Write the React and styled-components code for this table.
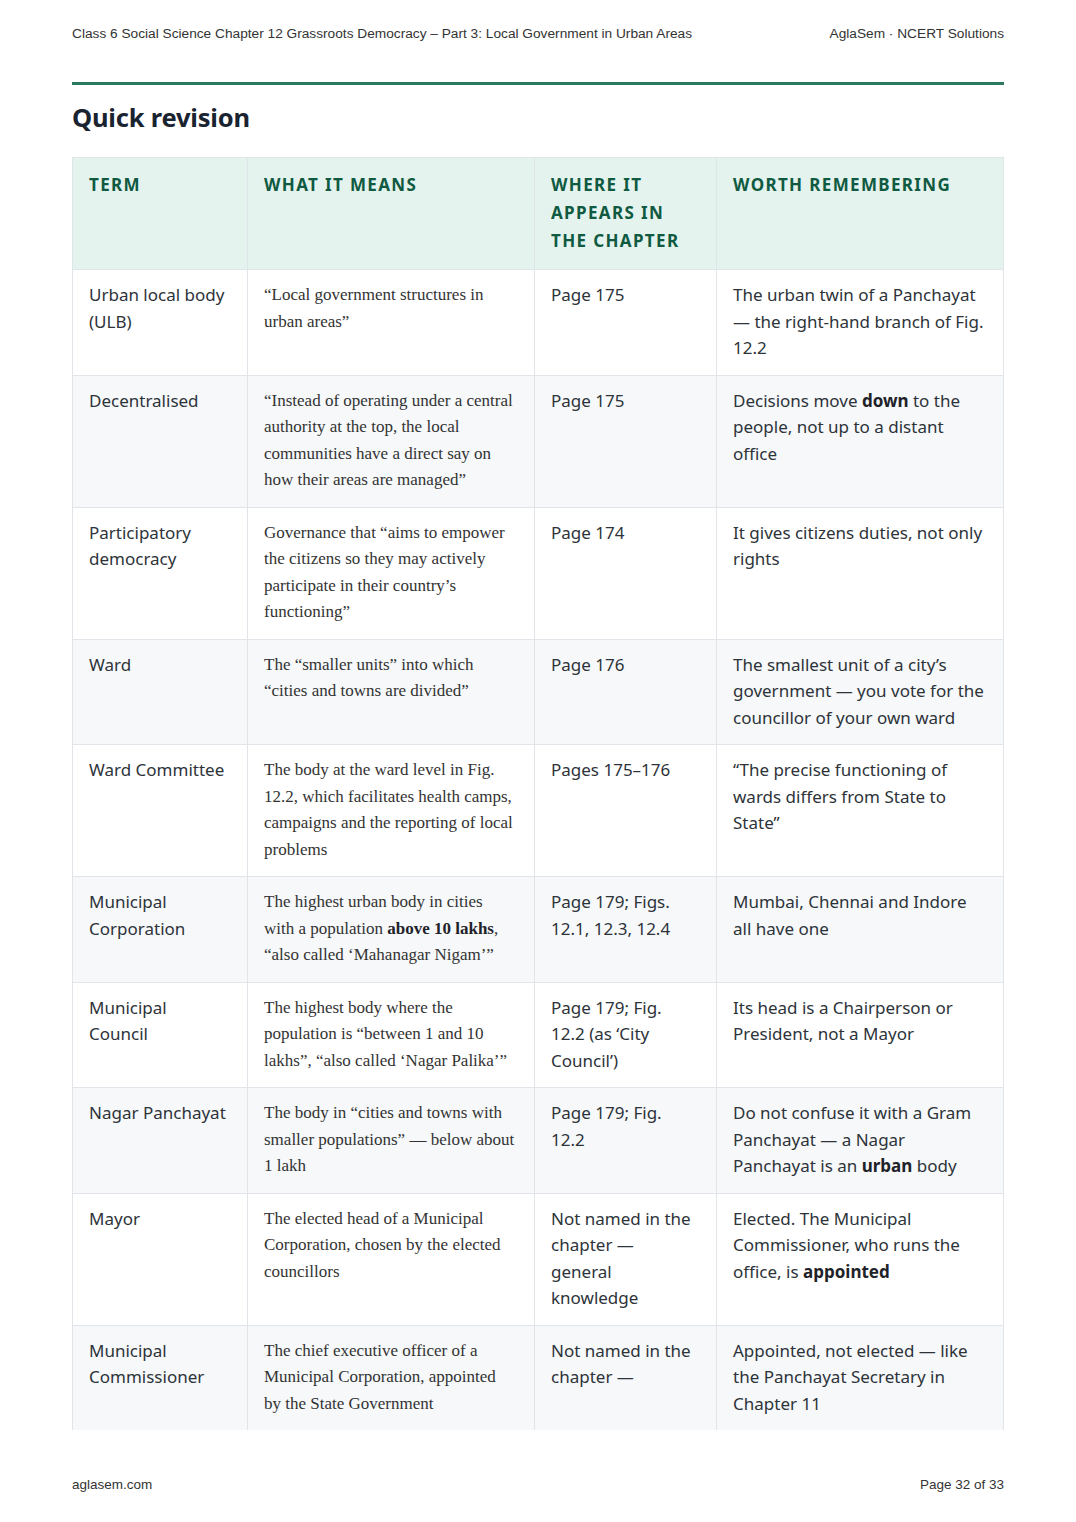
import React from "react";
import styled, { createGlobalStyle } from "styled-components";

const GlobalStyle = createGlobalStyle`
  html, body {
    margin: 0;
    padding: 0;
    background: #ffffff;
  }
  * {
    box-sizing: border-box;
  }
`;

const Page = styled.div`
  width: 1076px;
  min-height: 1522px;
  padding: 0 72px 29px 72px;
  display: flex;
  flex-direction: column;
  font-family: "Noto Sans", "Open Sans", sans-serif;
  color: #2d3339;
`;

const RunningHead = styled.header`
  display: flex;
  justify-content: space-between;
  align-items: center;
  padding-top: 26px;
  font-family: "Liberation Sans", Arial, sans-serif;
  font-size: 13.7px;
  line-height: 16px;
  color: #333;
`;

const Rule = styled.hr`
  margin: 40px 0 0;
  border: none;
  height: 3px;
  background: #2b7a5f;
`;

const Title = styled.h1`
  margin: 15px 0 23px;
  font-size: 25.5px;
  line-height: 34px;
  font-weight: 700;
  color: #1a2330;
  letter-spacing: -0.2px;
`;

const Table = styled.table`
  width: 931px;
  border-collapse: collapse;
  table-layout: fixed;
`;

const HeadCell = styled.th`
  background: #e4f3ee;
  border: 1px solid #dfe5e8;
  padding: 13px 19px 14px 16px;
  text-align: left;
  vertical-align: top;
  font-size: 17px;
  line-height: 28px;
  font-weight: 700;
  letter-spacing: 0.08em;
  text-transform: uppercase;
  color: #0f5a41;
`;

const Row = styled.tr`
  background: ${(props) => (props.$shade ? "#f6f8fa" : "#ffffff")};
`;

const Cell = styled.td`
  border: 1px solid #e1e5ea;
  border-bottom: ${(props) => (props.$open ? "none" : "1px solid #e1e5ea")};
  padding: 12px 19px 13px 16px;
  vertical-align: top;
  font-family: ${(props) =>
    props.$serif
      ? '"Liberation Serif", "Times New Roman", serif'
      : '"Noto Sans", "Open Sans", sans-serif'};
  font-size: 17px;
  line-height: 26.5px;
  color: ${(props) => (props.$serif ? "#333" : "#2d3339")};
  b {
    font-weight: 700;
    color: #1f2329;
  }
`;

const Footer = styled.footer`
  margin-top: auto;
  display: flex;
  justify-content: space-between;
  font-family: "Liberation Sans", Arial, sans-serif;
  font-size: 13.5px;
  line-height: 16px;
  color: #333;
`;

const rows = [
  {
    term: "Urban local body (ULB)",
    means: "“Local government structures in urban areas”",
    where: "Page 175",
    worth: "The urban twin of a Panchayat — the right-hand branch of Fig. 12.2",
  },
  {
    term: "Decentralised",
    means:
      "“Instead of operating under a central authority at the top, the local communities have a direct say on how their areas are managed”",
    where: "Page 175",
    worth: (
      <>
        Decisions move <b>down</b> to the people, not up to a distant office
      </>
    ),
  },
  {
    term: "Participatory democracy",
    means:
      "Governance that “aims to empower the citizens so they may actively participate in their country’s functioning”",
    where: "Page 174",
    worth: "It gives citizens duties, not only rights",
  },
  {
    term: "Ward",
    means: "The “smaller units” into which “cities and towns are divided”",
    where: "Page 176",
    worth:
      "The smallest unit of a city’s government — you vote for the councillor of your own ward",
  },
  {
    term: "Ward Committee",
    means:
      "The body at the ward level in Fig. 12.2, which facilitates health camps, campaigns and the reporting of local problems",
    where: "Pages 175–176",
    worth: "“The precise functioning of wards differs from State to State”",
  },
  {
    term: "Municipal Corporation",
    means: (
      <>
        The highest urban body in cities with a population{" "}
        <b>above 10 lakhs</b>, “also called ‘Mahanagar Nigam’”
      </>
    ),
    where: "Page 179; Figs. 12.1, 12.3, 12.4",
    worth: "Mumbai, Chennai and Indore all have one",
  },
  {
    term: "Municipal Council",
    means:
      "The highest body where the population is “between 1 and 10 lakhs”, “also called ‘Nagar Palika’”",
    where: "Page 179; Fig. 12.2 (as ‘City Council’)",
    worth: "Its head is a Chairperson or President, not a Mayor",
  },
  {
    term: "Nagar Panchayat",
    means:
      "The body in “cities and towns with smaller populations” — below about 1 lakh",
    where: "Page 179; Fig. 12.2",
    worth: (
      <>
        Do not confuse it with a Gram Panchayat — a Nagar Panchayat is an{" "}
        <b>urban</b> body
      </>
    ),
  },
  {
    term: "Mayor",
    means:
      "The elected head of a Municipal Corporation, chosen by the elected councillors",
    where: "Not named in the chapter — general knowledge",
    worth: (
      <>
        Elected. The Municipal Commissioner, who runs the office, is{" "}
        <b>appointed</b>
      </>
    ),
  },
  {
    term: "Municipal Commissioner",
    means:
      "The chief executive officer of a Municipal Corporation, appointed by the State Government",
    where: "Not named in the chapter —",
    worth: "Appointed, not elected — like the Panchayat Secretary in Chapter 11",
  },
];

const App = () => {
  return (
    <Page>
      <GlobalStyle />
      <RunningHead>
        <span>
          Class 6 Social Science Chapter 12 Grassroots Democracy – Part 3: Local
          Government in Urban Areas
        </span>
        <span>AglaSem · NCERT Solutions</span>
      </RunningHead>
      <Rule />
      <Title>Quick revision</Title>
      <Table>
        <colgroup>
          <col style={{ width: 175 }} />
          <col style={{ width: 287 }} />
          <col style={{ width: 182 }} />
          <col style={{ width: 287 }} />
        </colgroup>
        <thead>
          <tr>
            <HeadCell>Term</HeadCell>
            <HeadCell>What it means</HeadCell>
            <HeadCell>Where it appears in the chapter</HeadCell>
            <HeadCell>Worth remembering</HeadCell>
          </tr>
        </thead>
        <tbody>
          {rows.map((row, i) => {
            const open = i === rows.length - 1;
            return (
              <Row key={i} $shade={i % 2 === 1}>
                <Cell $open={open}>{row.term}</Cell>
                <Cell $open={open} $serif>
                  {row.means}
                </Cell>
                <Cell $open={open}>{row.where}</Cell>
                <Cell $open={open}>{row.worth}</Cell>
              </Row>
            );
          })}
        </tbody>
      </Table>
      <Footer>
        <span>aglasem.com</span>
        <span>Page 32 of 33</span>
      </Footer>
    </Page>
  );
};

export default App;
